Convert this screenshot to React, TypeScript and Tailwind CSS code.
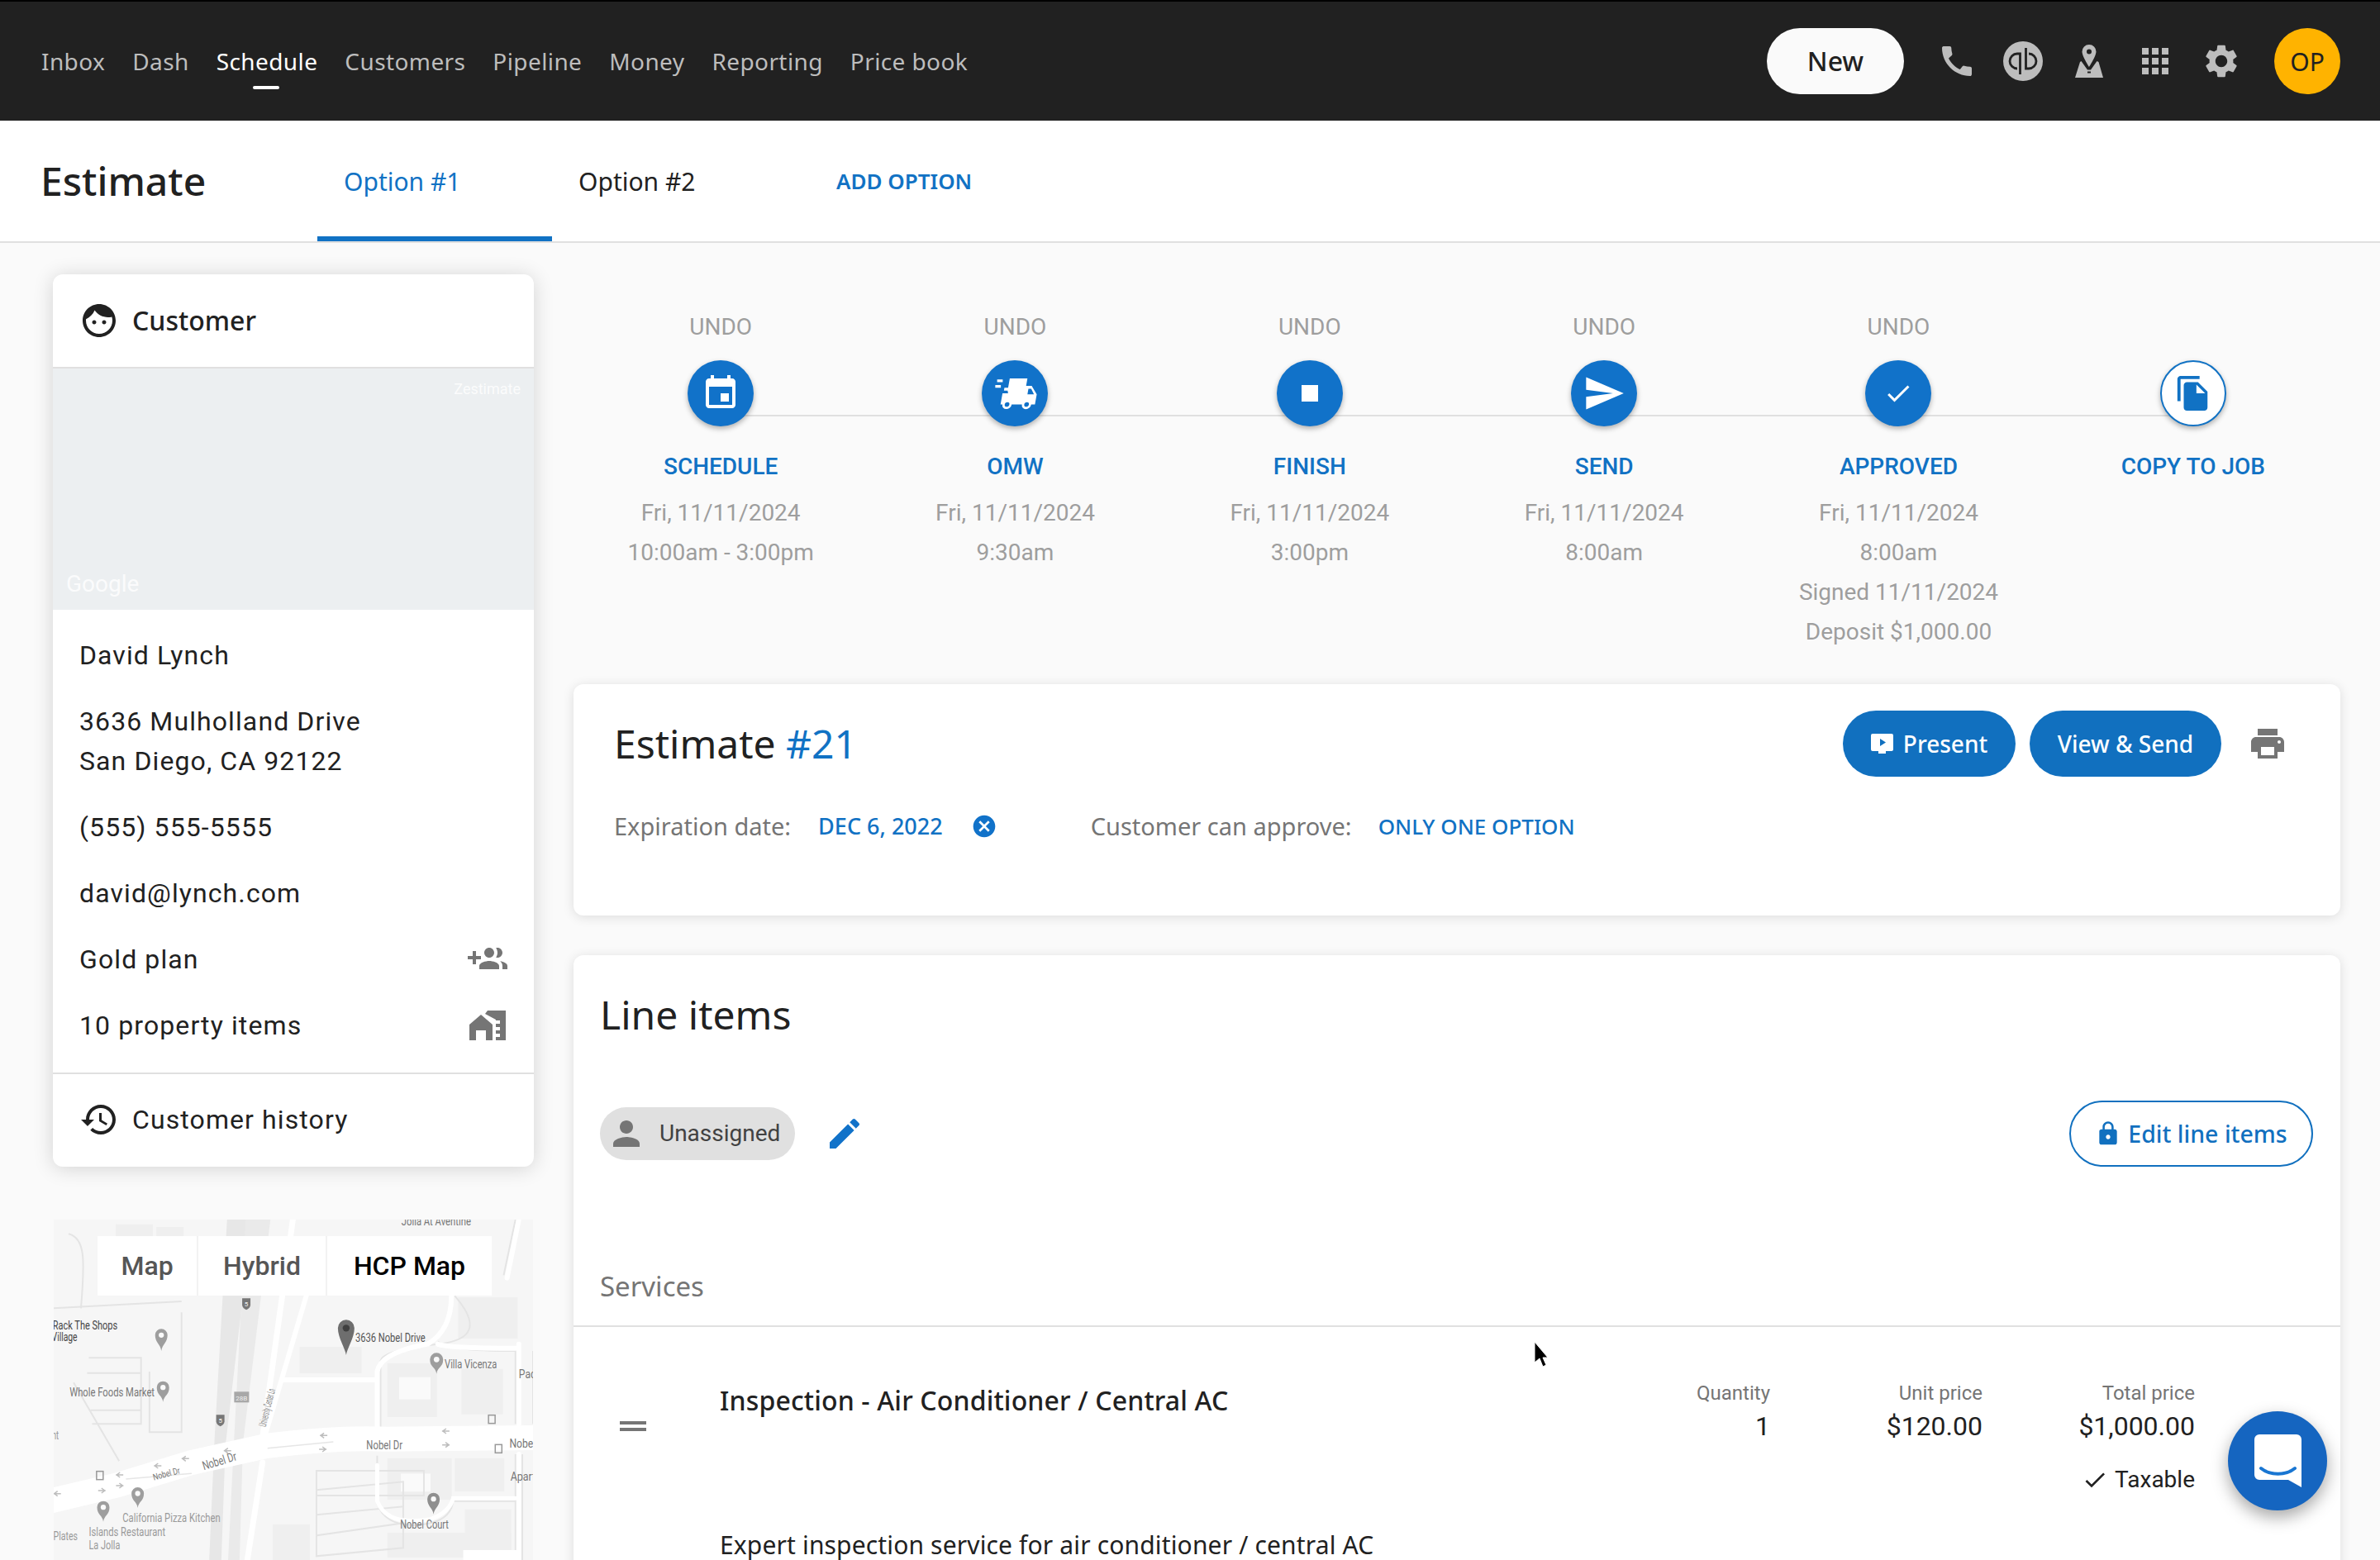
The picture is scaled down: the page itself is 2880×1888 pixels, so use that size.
import React from 'react';

const Icon = ({ d, className }: { d: string; className: string }) => (
  <svg viewBox="0 0 24 24" fill="currentColor" className={className}>
    <path d={d} />
  </svg>
);

const paths = {
  phone: 'M20.01 15.38c-1.23 0-2.42-.2-3.53-.56-.35-.12-.74-.03-1.01.24l-1.57 1.97c-2.83-1.35-5.48-3.9-6.89-6.83l1.95-1.66c.27-.28.35-.67.24-1.02-.37-1.11-.56-2.3-.56-3.53 0-.54-.45-.99-.99-.99H4.19C3.65 3 3 3.24 3 3.99 3 13.28 10.73 21 20.01 21c.71 0 .99-.63.99-1.18v-3.45c0-.54-.45-.99-.99-.99z',
  apps: 'M4 8h4V4H4v4zm6 12h4v-4h-4v4zm-6 0h4v-4H4v4zm0-6h4v-4H4v4zm6 0h4v-4h-4v4zm6-10v4h4V4h-4zm-6 4h4V4h-4v4zm6 6h4v-4h-4v4zm0 6h4v-4h-4v4z',
  gear: 'M19.14 12.94c.04-.3.06-.61.06-.94 0-.32-.02-.64-.07-.94l2.03-1.58c.18-.14.23-.41.12-.61l-1.92-3.32c-.12-.22-.37-.29-.59-.22l-2.39.96c-.5-.38-1.03-.7-1.62-.94l-.36-2.54c-.04-.24-.24-.41-.48-.41h-3.84c-.24 0-.43.17-.47.41l-.36 2.54c-.59.24-1.13.57-1.62.94l-2.39-.96c-.22-.08-.47 0-.59.22L2.74 8.87c-.12.21-.08.47.12.61l2.03 1.58c-.05.3-.09.63-.09.94s.02.64.07.94l-2.03 1.58c-.18.14-.23.41-.12.61l1.92 3.32c.12.22.37.29.59.22l2.39-.96c.5.38 1.03.7 1.62.94l.36 2.54c.05.24.24.41.48.41h3.84c.24 0 .44-.17.47-.41l.36-2.54c.59-.24 1.13-.56 1.62-.94l2.39.96c.22.08.47 0 .59-.22l1.92-3.32c.12-.22.07-.47-.12-.61l-2.01-1.58zM12 15.6c-1.98 0-3.6-1.62-3.6-3.6s1.62-3.6 3.6-3.6 3.6 1.62 3.6 3.6-1.62 3.6-3.6 3.6z',
  event: 'M17 12h-5v5h5v-5zM16 1v2H8V1H6v2H5c-1.11 0-1.99.9-1.99 2L3 19c0 1.1.89 2 2 2h14c1.1 0 2-.9 2-2V5c0-1.1-.9-2-2-2h-1V1h-2zm3 18H5V8h14v11z',
  send: 'M2.01 21L23 12 2.01 3 2 10l15 2-15 2z',
  stop: 'M6 6h12v12H6z',
  check: 'M9 16.17L4.83 12l-1.42 1.41L9 19 21 7l-1.41-1.41z',
  copy: 'M16 1H4c-1.1 0-2 .9-2 2v14h2V3h12V1zm-1 4l6 6v10c0 1.1-.9 2-2 2H7.99C6.89 23 6 22.1 6 21l.01-14c0-1.1.89-2 1.99-2h7zm-1 7h5.5L14 6.5V12z',
  cancel: 'M12 2C6.47 2 2 6.47 2 12s4.47 10 10 10 10-4.47 10-10S17.53 2 12 2zm5 13.59L15.59 17 12 13.41 8.41 17 7 15.59 10.59 12 7 8.41 8.41 7 12 10.59 15.59 7 17 8.41 13.41 12 17 15.59z',
  print: 'M19 8H5c-1.66 0-3 1.34-3 3v6h4v4h12v-4h4v-6c0-1.66-1.34-3-3-3zm-3 11H8v-5h8v5zm3-7c-.55 0-1-.45-1-1s.45-1 1-1 1 .45 1 1-.45 1-1 1zm-1-9H6v4h12V3z',
  lock: 'M18 8h-1V6c0-2.76-2.24-5-5-5S7 3.24 7 6v2H6c-1.1 0-2 .9-2 2v10c0 1.1.9 2 2 2h12c1.1 0 2-.9 2-2V10c0-1.1-.9-2-2-2zm-6 9c-1.1 0-2-.9-2-2s.9-2 2-2 2 .9 2 2-.9 2-2 2zm3.1-9H8.9V6c0-1.71 1.39-3.1 3.1-3.1 1.71 0 3.1 1.39 3.1 3.1v2z',
  person: 'M12 12c2.21 0 4-1.79 4-4s-1.79-4-4-4-4 1.79-4 4 1.79 4 4 4zm0 2c-2.67 0-8 1.34-8 4v2h16v-2c0-2.66-5.33-4-8-4z',
  edit: 'M3 17.25V21h3.75L17.81 9.94l-3.75-3.75L3 17.25zM20.71 7.04c.39-.39.39-1.02 0-1.41l-2.34-2.34c-.39-.39-1.02-.39-1.41 0l-1.83 1.83 3.75 3.75 1.83-1.83z',
  history: 'M13 3c-4.97 0-9 4.03-9 9H1l3.89 3.89.07.14L9 12H6c0-3.87 3.13-7 7-7s7 3.13 7 7-3.13 7-7 7c-1.93 0-3.68-.79-4.94-2.06l-1.42 1.42C8.27 19.99 10.51 21 13 21c4.97 0 9-4.03 9-9s-4.03-9-9-9zm-1 5v5l4.28 2.54.72-1.21-3.5-2.08V8H12z',
  groupAdd: 'M8 10H5V7H3v3H0v2h3v3h2v-3h3v-2zm10 1c1.66 0 2.99-1.34 2.99-3S19.66 5 18 5c-.32 0-.63.05-.91.14.57.81.9 1.79.9 2.86s-.34 2.04-.9 2.86c.28.09.59.14.91.14zm-5 0c1.66 0 2.99-1.34 2.99-3S14.66 5 13 5s-3 1.34-3 3 1.34 3 3 3zm6.62 2.16c.83.73 1.38 1.66 1.38 2.84v2h3v-2c0-1.54-2.37-2.49-4.38-2.84zM13 13c-2 0-6 1-6 3v2h12v-2c0-2-4-3-6-3z',
  face: 'M9 11.75c-.69 0-1.25.56-1.25 1.25s.56 1.25 1.25 1.25 1.25-.56 1.25-1.25-.56-1.25-1.25-1.25zm6 0c-.69 0-1.25.56-1.25 1.25s.56 1.25 1.25 1.25 1.25-.56 1.25-1.25-.56-1.25-1.25-1.25zM12 2C6.48 2 2 6.48 2 12s4.48 10 10 10 10-4.48 10-10S17.52 2 12 2zm0 18c-4.41 0-8-3.59-8-8 0-.29.02-.58.05-.86 2.36-1.05 4.23-2.98 5.21-5.37C11.07 8.33 14.05 10 17.42 10c.78 0 1.53-.09 2.25-.26.21.71.33 1.47.33 2.26 0 4.41-3.59 8-8 8z',
};

const navItems = ['Inbox', 'Dash', 'Schedule', 'Customers', 'Pipeline', 'Money', 'Reporting', 'Price book'];

const QuickbooksIcon = () => (
  <svg viewBox="0 0 48 48" className="w-[48px] h-[48px]">
    <circle cx="24" cy="24" r="24" fill="#bdbdbd" />
    <path d="M17 33a9 9 0 0 1 0-18h3.500v25M31 15a9 9 0 0 1 0 18h-3.500V8" fill="none" stroke="#212121" strokeWidth="2.800" />
  </svg>
);

const PlanPinIcon = () => (
  <svg viewBox="0 0 34 40" className="w-[34px] h-[40px]">
    <path d="M17 0a8.500 8.500 0 0 0-8.500 8.500C8.500 14 17 27 17 27s8.500-13 8.500-18.500A8.500 8.500 0 0 0 17 0zm0 11.500a3 3 0 1 1 0-6 3 3 0 0 1 0 6z" fill="#bdbdbd" />
    <path d="M7.500 20 15 30.500h4L26.500 20l2 1L34 40H0l6-19zM15 32.500v2h4v-2z" fill="#bdbdbd" fillRule="evenodd" />
  </svg>
);

const Header = () => (
  <header className="flex items-center h-[146px] bg-[#212121] border-t-[2px] border-black pl-[50px] font-['Noto_Sans',sans-serif]">
    <nav className="flex items-center gap-[33px] text-[28px] leading-[40px] tracking-[0.4px] text-[#bdbdbd]">
      {navItems.map(item => (
        <span key={item} className={item === 'Schedule' ? 'relative text-white' : ''}>
          {item}
          {item === 'Schedule' && <span className="absolute left-[44px] top-[50px] w-[32px] h-[4px] rounded-full bg-white" />}
        </span>
      ))}
    </nav>
    <div className="ml-auto flex items-center text-[#bdbdbd] pr-[48px]">
      <button className="w-[166px] h-[80px] rounded-full bg-[#fafafa] text-[#212121] text-[32px] font-medium mr-[24px]">New</button>
      <span className="w-[80px] flex justify-center"><Icon d={paths.phone} className="w-[48px] h-[48px]" /></span>
      <span className="w-[80px] flex justify-center"><QuickbooksIcon /></span>
      <span className="w-[80px] flex justify-center"><PlanPinIcon /></span>
      <span className="w-[80px] flex justify-center"><Icon d={paths.apps} className="w-[48px] h-[48px]" /></span>
      <span className="w-[80px] flex justify-center"><Icon d={paths.gear} className="w-[48px] h-[48px]" /></span>
      <span className="w-[80px] h-[80px] ml-[24px] rounded-full bg-[#ffb300] text-[#212121] text-[30px] flex items-center justify-center">OP</span>
    </div>
  </header>
);

const TabBar = () => (
  <div className="flex items-center h-[148px] bg-white border-b-[2px] border-[#e0e0e0] font-['Noto_Sans',sans-serif]">
    <h1 className="w-[384px] pl-[49px] text-[48px] leading-[60px] text-[#212121] font-medium">Estimate</h1>
    <div className="relative w-[284px] h-full flex items-center pl-[32px] text-[30px] text-[#1172c4]">
      Option #1
      <span className="absolute left-0 right-0 bottom-0 h-[6px] bg-[#1172c4]" />
    </div>
    <div className="w-[284px] flex items-center pl-[32px] text-[30px] text-[#212121]">Option #2</div>
    <div className="ml-[60px] text-[26px] font-semibold text-[#1172c4]">ADD OPTION</div>
  </div>
);

const X = (z: number) => (z - 61) / 2.45;
const Y = (z: number) => (z - 108) / 3;

const Label = ({ x1, x2, y, children, fill = '#8a8a8a', size = 15, rotate }: { x1: number; x2: number; y: number; children: string; fill?: string; size?: number; rotate?: number }) => (
  <text
    x={X(x1)}
    y={Y(y)}
    fontSize={size}
    fill={fill}
    fontFamily="Roboto, sans-serif"
    textLength={X(x2) - X(x1)}
    lengthAdjust="spacingAndGlyphs"
    transform={rotate ? `rotate(${rotate} ${X(x1)} ${Y(y)})` : undefined}
  >
    {children}
  </text>
);

const Pin = ({ cx, top, tip, w, fill = '#9e9e9e', dot = '#fafafa' }: { cx: number; top: number; tip: number; w: number; fill?: string; dot?: string }) => {
  const x = X(cx);
  const t = Y(top);
  const b = Y(tip);
  const r = w / 2;
  return (
    <g>
      <path d={`M${x} ${b}C${x - 1} ${b - 8} ${x - r} ${t + r * 2.2} ${x - r} ${t + r}A${r} ${r} 0 0 1 ${x + r} ${t + r}C${x + r} ${t + r * 2.2} ${x + 1} ${b - 8} ${x} ${b}Z`} fill={fill} />
      <circle cx={x} cy={t + r} r={r * 0.42} fill={dot} />
    </g>
  );
};

const Shield = ({ cx, cy }: { cx: number; cy: number }) => (
  <g>
    <path d={`M${X(cx) - 5} ${Y(cy) - 7}h10v8c0 3-2.500 5-5 6-2.500-1-5-3-5-6z`} fill="#777" />
    <text x={X(cx)} y={Y(cy) + 3} fontSize="8" fill="#f5f5f5" textAnchor="middle" fontFamily="Roboto, sans-serif">5</text>
  </g>
);

const Arrow = ({ x, y, dir = 1 }: { x: number; y: number; dir?: number }) => (
  <path d={`M${X(x) - 5 * dir} ${Y(y)}h${9 * dir}M${X(x) - 1 * dir} ${Y(y) - 3}l${4 * dir} 3l${-4 * dir} 3`} fill="none" stroke="#bdbdbd" strokeWidth="1.500" />
);

const MapSketch = () => (
  <svg viewBox="0 0 580 412" className="absolute inset-0 w-[580px] h-[412px]">
    <rect width="580" height="412" fill="#f6f6f6" />
    {/* buildings */}
    {[
      [X(245), Y(125), 45, 30], [X(365), Y(135), 33, 25], [X(790), Y(570), 75, 32], [X(1050), Y(630), 60, 65],
      [X(1260), Y(390), 72, 50], [X(1270), Y(650), 50, 55], [X(1050), Y(975), 78, 50], [X(1280), Y(1160), 56, 45],
      [X(710), Y(1215), 45, 43], [X(1050), Y(1245), 150, 30], [X(1250), Y(975), 60, 40],
    ].map(([x, y, w, h], i) => (
      <rect key={i} x={x} y={y} width={w} height={h} fill="#efefef" />
    ))}
    <rect x={X(1085)} y={Y(680)} width="38" height="27" fill="#fafafa" />
    <rect x={X(1090)} y={Y(1030)} width="36" height="22" fill="#fafafa" />
    {/* minor road outlines */}
    <g fill="none" stroke="#e4e4e4" strokeWidth="2">
      <path d={`M0 ${Y(430)}L${X(440)} ${Y(405)}M${X(440)} ${Y(445)}V${Y(880)}H${X(345)}V${Y(660)}`} />
      <path d={`M${X(105)} ${Y(160)}c20 5 20 30 15 90M${X(120)} ${Y(700)}L${X(255)} ${Y(985)}`} />
      <path d={`M${X(165)} ${Y(610)}H${X(320)}V${Y(850)}H${X(175)}M${X(160)} ${Y(665)}H${X(320)}M${X(170)} ${Y(800)}H${X(320)}`} />
      <path d={`M${X(840)} ${Y(1020)}h130v30h-130zM${X(840)} ${Y(1090)}l105-10v50l-105 15zM${X(840)} ${Y(1180)}l105-10v50l-105 10z`} />
      <path d={`M${X(1030)} ${Y(860)}V${Y(620)}Q${X(1040)} ${Y(580)} ${X(1200)} ${Y(560)}T${X(1250)} ${Y(385)}`} />
      <path d={`M${X(1020)} ${Y(965)}V${Y(1140)}Q${X(1050)} ${Y(1240)} ${X(1180)} ${Y(1210)}Q${X(1240)} ${Y(1190)} ${X(1245)} ${Y(1130)}H${X(1430)}`} />
      <path d={`M${X(1200)} ${Y(550)}Q${X(1220)} ${Y(585)} ${X(1430)} ${Y(585)}V${Y(850)}M${X(1482)} ${Y(585)}L${X(1482)} ${Y(850)}`} />
      <path d={`M${X(1430)} ${Y(108)}L${X(1395)} ${Y(310)}M${X(1430)} ${Y(960)}V${Y(1344)}M${X(1450)} ${Y(960)}V${Y(1344)}`} />
    </g>
    {/* freeway and its shoulders */}
    <path d={`M${X(575)} ${Y(108)}h30L${X(570)} ${Y(930)}L${X(558)} ${Y(1344)}H${X(522)}L${X(538)} ${Y(900)}Z`} fill="#e7e7e7" />
    <path d={`M${X(630)} ${Y(108)}h30L${X(622)} ${Y(920)}L${X(612)} ${Y(1344)}H${X(578)}L${X(596)} ${Y(900)}Z`} fill="#eaeaea" />
    {/* white streets */}
    <g fill="none" stroke="#ffffff" strokeLinecap="round">
      <path d={`M${X(770)} ${Y(108)}L${X(680)} ${Y(900)}`} strokeWidth="7" />
      <path d={`M${X(810)} ${Y(384)}L${X(688)} ${Y(890)}`} strokeWidth="6" />
      <path d={`M${X(680)} ${Y(990)}L${X(635)} ${Y(1344)}`} strokeWidth="7" />
      <path d={`M${X(740)} ${Y(690)}H${X(1010)}`} strokeWidth="6" />
      <path d={`M${X(1020)} ${Y(860)}V${Y(660)}Q${X(1030)} ${Y(590)} ${X(1170)} ${Y(560)}Q${X(1240)} ${Y(510)} ${X(1240)} ${Y(385)}`} strokeWidth="6" />
      <path d={`M${X(1200)} ${Y(560)}Q${X(1230)} ${Y(575)} ${X(1430)} ${Y(575)}`} strokeWidth="6" />
      <path d={`M${X(1440)} ${Y(108)}L${X(1405)} ${Y(320)}`} strokeWidth="6" />
      <path d={`M${X(1440)} ${Y(560)}V${Y(850)}M${X(1440)} ${Y(960)}V${Y(1344)}`} strokeWidth="6" />
      <path d={`M${X(1020)} ${Y(1000)}V${Y(1130)}Q${X(1050)} ${Y(1225)} ${X(1180)} ${Y(1195)}Q${X(1235)} ${Y(1170)} ${X(1245)} ${Y(1120)}H${X(1430)}`} strokeWidth="5" />
    </g>
    <path d={`M-5 ${Y(1130)}L${X(250)} ${Y(1072)}L${X(470)} ${Y(990)}L${X(690)} ${Y(930)}Q${X(900)} ${Y(897)} ${X(1050)} ${Y(905)}L${X(1490)} ${Y(900)}`} fill="none" stroke="#ffffff" strokeWidth="30" />
    <path d={`M${X(695)} ${Y(938)}L${X(890)} ${Y(915)}M${X(470)} ${Y(1030)}L${X(275)} ${Y(1050)}`} fill="none" stroke="#e6e6e6" strokeWidth="1.500" />
    {/* labels */}
    <Label x1={1092} x2={1298} y={130} fill="#777">Jolla At Aventine</Label>
    <Label x1={58} x2={250} y={508} fill="#444">Rack The Shops</Label>
    <Label x1={55} x2={131} y={550} fill="#444">Village</Label>
    <Label x1={108} x2={360} y={750} fill="#777">Whole Foods Market</Label>
    <Label x1={1220} x2={1375} y={647} fill="#777">Villa Vicenza</Label>
    <Label x1={955} x2={1163} y={553} fill="#555">3636 Nobel Drive</Label>
    <Label x1={1440} x2={1490} y={683} fill="#777">Pac</Label>
    <Label x1={690} x2={805} y={862} size={13} fill="#888" rotate={-76}>University Center Ln</Label>
    <Label x1={988} x2={1095} y={942} fill="#777">Nobel Dr</Label>
    <Label x1={1412} x2={1490} y={935} fill="#777">Nobel</Label>
    <Label x1={506} x2={610} y={1018} fill="#777" rotate={-17}>Nobel Dr</Label>
    <Label x1={358} x2={440} y={1055} size={11} fill="#777" rotate={-15}>Nobel Dr</Label>
    <Label x1={1415} x2={1490} y={1056} fill="#777">Apart</Label>
    <Label x1={265} x2={555} y={1205} fill="#999">California Pizza Kitchen</Label>
    <Label x1={165} x2={392} y={1256} fill="#999">Islands Restaurant</Label>
    <Label x1={165} x2={258} y={1305} fill="#999">La Jolla</Label>
    <Label x1={60} x2={132} y={1273} fill="#999">Plates</Label>
    <Label x1={1088} x2={1232} y={1230} fill="#777">Nobel Court</Label>
    <Label x1={56} x2={76} y={905} fill="#999">nt</Label>
    {/* pins */}
    <Pin cx={928} top={472} tip={600} w={20} fill="#6e6e6e" dot="#3f3f3f" />
    <Pin cx={1196} top={592} tip={668} w={16} />
    <Pin cx={1187} top={1100} tip={1178} w={15} fill="#8f8f8f" />
    <Pin cx={385} top={695} tip={770} w={15} />
    <Pin cx={380} top={505} tip={585} w={15} />
    <Pin cx={310} top={1080} tip={1155} w={15} />
    <Pin cx={208} top={1130} tip={1205} w={15} />
    {/* road marks */}
    <Shield cx={632} cy={415} />
    <Shield cx={555} cy={838} />
    <rect x={X(596)} y={Y(733)} width="18" height="13" fill="#a8a8a8" />
    <text x={X(618)} y={Y(765)} fontSize="8" fill="#f0f0f0" textAnchor="middle" fontFamily="Roboto, sans-serif">28B</text>
    <Arrow x={860} y={892} dir={-1} />
    <Arrow x={860} y={942} />
    <Arrow x={1222} y={876} dir={-1} />
    <Arrow x={1225} y={926} />
    <Arrow x={575} y={947} dir={-1} />
    <Arrow x={368} y={1002} dir={-1} />
    <Arrow x={450} y={976} dir={-1} />
    <Arrow x={255} y={1035} dir={-1} />
    <Arrow x={258} y={1074} />
    <Arrow x={205} y={1092} />
    <Arrow x={70} y={1103} dir={-1} />
    <rect x={X(1350)} y={Y(818)} width="8" height="10" fill="none" stroke="#999" strokeWidth="1.500" />
    <rect x={X(1370)} y={Y(925)} width="8" height="10" fill="none" stroke="#999" strokeWidth="1.500" />
    <rect x={X(188)} y={Y(1022)} width="8" height="10" fill="none" stroke="#999" strokeWidth="1.500" />
    <rect x={X(1275)} y={Y(1308)} width="65" height="12" fill="#ffffff" />
  </svg>
);

const Sidebar = () => (
  <aside className="w-[582px] ml-[64px] mt-[38px] shrink-0 font-['Roboto',sans-serif]">
    <div className="rounded-[12px] bg-white shadow-[0_2px_24px_rgba(0,0,0,0.16)] overflow-hidden">
      <div className="flex items-center h-[114px] pl-[32px] gap-[16px] border-b-[2px] border-[#e0e0e0] font-['Noto_Sans',sans-serif] text-[32px] font-medium text-[#212121]">
        <Icon d={paths.face} className="w-[48px] h-[48px]" />
        Customer
      </div>
      <div className="relative h-[292px] bg-[#eceff1] text-white">
        <span className="absolute right-[16px] top-[14px] text-[18px] leading-[22px] opacity-80">Zestimate</span>
        <span className="absolute left-[16px] bottom-[14px] text-[28px] leading-[34px] opacity-80">Google</span>
      </div>
      <div className="pt-[31px] pl-[32px] pr-[32px] text-[32px] leading-[48px] tracking-[1.1px] text-[#212121] border-b-[2px] border-[#e0e0e0] h-[562px]">
        <p>David Lynch</p>
        <p className="mt-[32px]">3636 Mulholland Drive<br />San Diego, CA 92122</p>
        <p className="mt-[32px]">(555) 555-5555</p>
        <p className="mt-[32px]">david@lynch.com</p>
        <div className="mt-[32px] flex items-center justify-between">
          Gold plan
          <Icon d={paths.groupAdd} className="w-[48px] h-[48px] text-[#757575]" />
        </div>
        <div className="mt-[32px] flex items-center justify-between">
          10 property items
          <svg viewBox="0 0 44 36" className="w-[44px] h-[36px] text-[#757575] mr-[2px]" fill="currentColor">
            <path d="M0 36V17L14 5l14 12v19h-8V24H8v12z" />
            <path d="M19 4l3-4h22v36H32v-4h5v-4h-5v-4h5v-4h-5v-4h5v-4h-5v-1z" />
          </svg>
        </div>
      </div>
      <div className="flex items-center h-[112px] pb-[2px] pl-[32px] gap-[16px] text-[32px] tracking-[1.1px] text-[#212121]">
        <Icon d={paths.history} className="w-[48px] h-[48px]" />
        Customer history
      </div>
    </div>
    <div className="relative mt-[64px] h-[412px] w-[580px] ml-px overflow-hidden">
      <MapSketch />
      <div className="absolute left-[53px] top-[20px] w-[477px] h-[72px] bg-white flex text-[32px] font-medium text-[#565656]">
        <span className="w-[122px] flex items-center justify-center border-r-[2px] border-[#f2f2f2]">Map</span>
        <span className="w-[156px] flex items-center justify-center border-r-[2px] border-[#f2f2f2]">Hybrid</span>
        <span className="flex-1 flex items-center justify-center text-black">HCP Map</span>
      </div>
    </div>
  </aside>
);

const TruckIcon = () => (
  <svg viewBox="0 0 48 48" className="w-[54px] h-[54px] text-white" fill="currentColor">
    <g transform="skewX(-10) translate(8 0)">
      <path d="M12 8h19v8h6l7 9v11h-4a5 5 0 0 1-10 0H19a5 5 0 0 1-10 0H7V24h6l-1-3H8v-3h4zM34 19v6h7l-4-6zM14 33.500a2.500 2.500 0 1 0 0 5 2.500 2.500 0 0 0 0-5zm21 0a2.500 2.500 0 1 0 0 5 2.500 2.500 0 0 0 0-5z" fillRule="evenodd" />
    </g>
    <path d="M5 9h6v3H5zM3 15h6v3H3z" />
  </svg>
);

const steps = [
  { label: 'SCHEDULE', lines: ['Fri, 11/11/2024', '10:00am - 3:00pm'], icon: <Icon d={paths.event} className="w-[48px] h-[48px] text-white" /> },
  { label: 'OMW', lines: ['Fri, 11/11/2024', '9:30am'], icon: <TruckIcon /> },
  { label: 'FINISH', lines: ['Fri, 11/11/2024', '3:00pm'], icon: <Icon d={paths.stop} className="w-[40px] h-[40px] text-white" /> },
  { label: 'SEND', lines: ['Fri, 11/11/2024', '8:00am'], icon: <Icon d={paths.send} className="w-[52px] h-[52px] text-white" /> },
  { label: 'APPROVED', lines: ['Fri, 11/11/2024', '8:00am', 'Signed 11/11/2024', 'Deposit $1,000.00'], icon: <Icon d={paths.check} className="w-[36px] h-[36px] text-white" /> },
];

const Step = ({ label, lines, icon, outline }: { label: string; lines: string[]; icon: React.ReactNode; outline?: boolean }) => (
  <div className="relative flex flex-col items-center flex-1">
    <div className="h-[48px] text-[28px] leading-[48px] text-[#9e9e9e]">{outline ? '' : 'UNDO'}</div>
    <div className={`mt-[16px] w-[80px] h-[80px] rounded-full flex items-center justify-center shadow-[0_3px_6px_rgba(0,0,0,0.3)] ${outline ? 'bg-white border-[2px] border-[#1172c4]' : 'bg-[#1172c9]'}`}>
      {icon}
    </div>
    <div className="mt-[25px] h-[48px] text-[28px] leading-[48px] font-medium text-[#1172c4]">{label}</div>
    <div className="mt-[8px] text-[28px] leading-[48px] text-[#9e9e9e] text-center">
      {lines.map(line => (
        <div key={line}>{line}</div>
      ))}
    </div>
  </div>
);

const Timeline = () => (
  <div className="relative h-[534px] pt-[78px] flex font-['Roboto',sans-serif]">
    <div className="absolute left-[178px] top-[208px] w-[1782px] h-[2px] bg-[#e0e0e0]" />
    {steps.map(s => (
      <Step key={s.label} {...s} />
    ))}
    <Step label="COPY TO JOB" lines={[]} outline icon={<Icon d={paths.copy} className="w-[46px] h-[46px] text-[#1172c4]" />} />
  </div>
);

const EstimateCard = () => (
  <section className="h-[280px] rounded-[12px] bg-white shadow-[0_2px_14px_rgba(0,0,0,0.12)] pt-[32px] pl-[49px] pr-[64px] font-['Noto_Sans',sans-serif]">
    <div className="flex items-center h-[80px]">
      <h2 className="text-[48px] leading-[60px] text-[#212121]">Estimate <span className="text-[#1172c4]">#21</span></h2>
      <button className="ml-auto flex items-center justify-center gap-[12px] w-[209px] h-[80px] rounded-full bg-[#1170bf] text-white text-[28px] font-medium">
        <svg viewBox="0 0 27 24" className="w-[27px] h-[24px]" fill="#fff">
          <path d="M2 0h23a2 2 0 0 1 2 2v17a2 2 0 0 1-2 2h-7v3H9v-3H2a2 2 0 0 1-2-2V2a2 2 0 0 1 2-2zm9 6v9l7-4.500z" fillRule="evenodd" />
        </svg>
        Present
      </button>
      <button className="ml-[17px] w-[232px] h-[80px] rounded-full bg-[#1170bf] text-white text-[28px] font-medium">View &amp; Send</button>
      <Icon d={paths.print} className="ml-[32px] w-[48px] h-[48px] text-[#757575]" />
    </div>
    <div className="flex items-center h-[40px] mt-[40px] text-[29px] whitespace-nowrap">
      <span className="text-[#757575]">Expiration date:</span>
      <span className="ml-[33px] text-[27px] font-medium text-[#1172c4]">DEC 6, 2022</span>
      <Icon d={paths.cancel} className="ml-[34px] w-[32px] h-[32px] text-[#1172c9]" />
      <span className="ml-[113px] text-[#757575]">Customer can approve:</span>
      <span className="ml-[32px] text-[26px] font-medium text-[#1172c4]">ONLY ONE OPTION</span>
    </div>
  </section>
);

const PriceCol = ({ label, value }: { label: string; value: string }) => (
  <div className="w-[257px] text-right">
    <div className="h-[40px] text-[24px] leading-[40px] text-[#757575]">{label}</div>
    <div className="h-[40px] text-[32px] leading-[40px] text-[#212121]">{value}</div>
  </div>
);

const LineItemsCard = () => (
  <section className="mt-[48px] h-[800px] rounded-t-[12px] bg-white shadow-[0_2px_14px_rgba(0,0,0,0.12)] font-['Noto_Sans',sans-serif]">
    <div className="pt-[32px] pl-[32px] h-[114px] text-[48px] leading-[80px] text-[#212121]">Line items</div>
    <div className="flex items-center h-[80px] mt-[62px] pl-[32px] pr-[33px]">
      <div className="flex items-center h-[64px] w-[236px] rounded-full bg-[#e0e0e0] pl-[8px] font-['Roboto',sans-serif] text-[28px] text-[#424242]">
        <Icon d={paths.person} className="w-[48px] h-[48px] text-[#757575]" />
        <span className="ml-[16px]">Unassigned</span>
      </div>
      <Icon d={paths.edit} className="ml-[36px] w-[48px] h-[48px] text-[#1172c9]" />
      <button className="ml-auto flex items-center justify-center gap-[8px] w-[295px] h-[80px] rounded-full border-[2px] border-[#1170bf] text-[#1170bf] text-[28.500px] font-medium">
        <Icon d={paths.lock} className="w-[32px] h-[32px]" />
        Edit line items
      </button>
    </div>
    <div className="h-[194px] pt-[121px] pl-[32px] border-b-[2px] border-[#e0e0e0] text-[33px] leading-[48px] text-[#757575]">Services</div>
    <div className="flex pr-[176px]">
      <div className="ml-[56px] mt-[114px] w-[32px] flex flex-col gap-[4px]">
        <span className="h-[4px] bg-[#757575]" />
        <span className="h-[4px] bg-[#757575]" />
      </div>
      <div className="ml-[89px] mt-[65px] text-[32px] leading-[48px] tracking-[0.15px] text-[#212121]">
        <div className="font-medium">Inspection - Air Conditioner / Central AC</div>
        <div className="mt-[127px] text-[30px]">Expert inspection service for air conditioner / central AC</div>
      </div>
      <div className="ml-auto mt-[60px] font-['Roboto',sans-serif]">
        <div className="flex -ml-[100px]">
          <PriceCol label="Quantity" value="1" />
          <PriceCol label="Unit price" value="$120.00" />
          <PriceCol label="Total price" value="$1,000.00" />
        </div>
        <div className="flex items-center justify-end mt-[25px] h-[40px] text-[28px] text-[#212121]">
          <Icon d={paths.check} className="w-[32px] h-[32px] mr-[8px]" />
          Taxable
        </div>
      </div>
    </div>
  </section>
);

const App: React.FC = () => (
  <div className="relative w-[2880px] h-[1888px] overflow-hidden bg-[#fafafa]">
    <Header />
    <TabBar />
    <div className="flex">
      <Sidebar />
      <main className="ml-[48px] w-[2138px]">
        <Timeline />
        <EstimateCard />
        <LineItemsCard />
      </main>
    </div>
    {/* chat launcher */}
    <div className="absolute left-[2696px] top-[1708px] w-[120px] h-[120px] rounded-full bg-[#1565c0] shadow-[0_8px_20px_rgba(0,0,0,0.35)] flex items-center justify-center">
      <svg viewBox="0 0 57 64" className="w-[57px] h-[64px]">
        <path d="M6 0h45a6 6 0 0 1 6 6v58l-16-9H6a6 6 0 0 1-6-6V6a6 6 0 0 1 6-6z" fill="#fff" />
        <path d="M8 41c11 9 30 9 41 0" fill="none" stroke="#1976d2" strokeWidth="4" strokeLinecap="round" />
      </svg>
    </div>
    {/* mouse pointer */}
    <svg viewBox="0 0 18 32" className="absolute left-[1856px] top-[1623px] w-[18px] h-[32px]">
      <path d="M1 1v25l6-5 4 10 4-2-4-9h6z" fill="#000" stroke="#fff" strokeWidth="1" />
    </svg>
  </div>
);

export default App;
